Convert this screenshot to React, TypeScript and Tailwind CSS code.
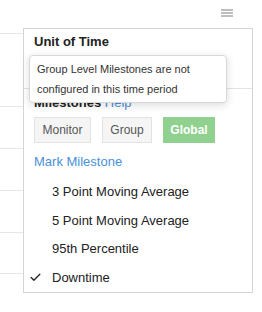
import { Check } from "lucide-react";

const items = [
  { label: "3 Point Moving Average", checked: false },
  { label: "5 Point Moving Average", checked: false },
  { label: "95th Percentile", checked: false },
  { label: "Downtime", checked: true },
];

export default function App() {
  return (
    <div
      className="relative h-[312px] w-[262px] overflow-hidden bg-white text-[#222]"
      style={{ fontFamily: '"Liberation Sans", Arial, sans-serif' }}
    >
      {/* page behind the menu */}
      <div className="w-[253px]">
        <div className="flex h-[34px] justify-end border-b border-[#e6e6e6] pr-[20px] pt-[9px]">
          <div className="flex w-[12px] flex-col gap-[1px]">
            <span className="h-[2px] bg-[#bdbdbd]" />
            <span className="h-[2px] bg-[#bdbdbd]" />
            <span className="h-[2px] bg-[#bdbdbd]" />
          </div>
        </div>
        <div className="h-[73px] border-b border-[#e6e6e6]" />
        <div className="h-[42px] border-b border-[#e6e6e6]" />
        <div className="h-[42px] border-b border-[#e6e6e6]" />
        <div className="h-[42px] border-b border-[#e6e6e6]" />
        <div className="h-[41px] border-b border-[#e6e6e6]" />
      </div>

      {/* dropdown menu */}
      <div className="absolute left-[23px] top-[28px] h-[265px] w-[230px] border border-[#d4d4d4] bg-white">
        <div className="h-[60px] border-b border-[#e3e3e3] pl-[10px] pt-[5px]">
          <div className="text-[13px] font-bold leading-[16px]">Unit of Time</div>
        </div>

        <div className="pl-[10px] pt-[6px]">
          <div className="text-[13px] leading-[16px]">
            <span className="font-bold">Milestones</span>{" "}
            <span className="text-[#4a90d9]">Help</span>
          </div>
          <div className="mt-[6px] flex gap-[11px] text-[12px]">
            <button className="h-[26px] w-[57px] border border-[#e3e3e3] bg-[#f5f5f5] text-[#555]">
              Monitor
            </button>
            <button className="h-[26px] w-[50px] border border-[#e3e3e3] bg-[#f5f5f5] text-[#555]">
              Group
            </button>
            <button className="h-[26px] w-[52px] border border-[#90d18f] bg-[#90d18f] font-bold text-white">
              Global
            </button>
          </div>
          <div className="mt-[11px] text-[13px] leading-[16px] text-[#4a90d9]">Mark Milestone</div>
        </div>

        <ul className="mt-[8px]">
          {items.map((it) => (
            <li key={it.label} className="relative flex h-[28.4px] items-center pl-[28px] text-[13px]">
              {it.checked && (
                <Check className="absolute left-[5px] top-[8px] h-[13px] w-[13px]" strokeWidth={2.4} />
              )}
              {it.label}
            </li>
          ))}
        </ul>

        {/* tooltip */}
        <div className="absolute left-[5px] top-[26px] w-[198px] rounded-[4px] border border-[#d9d9d9] bg-white px-[7px] py-[3px] text-[11px] leading-[20px] text-[#333] shadow-[0_2px_8px_rgba(0,0,0,0.15)]">
          Group Level Milestones are not configured in this time period
        </div>
      </div>
    </div>
  );
}
